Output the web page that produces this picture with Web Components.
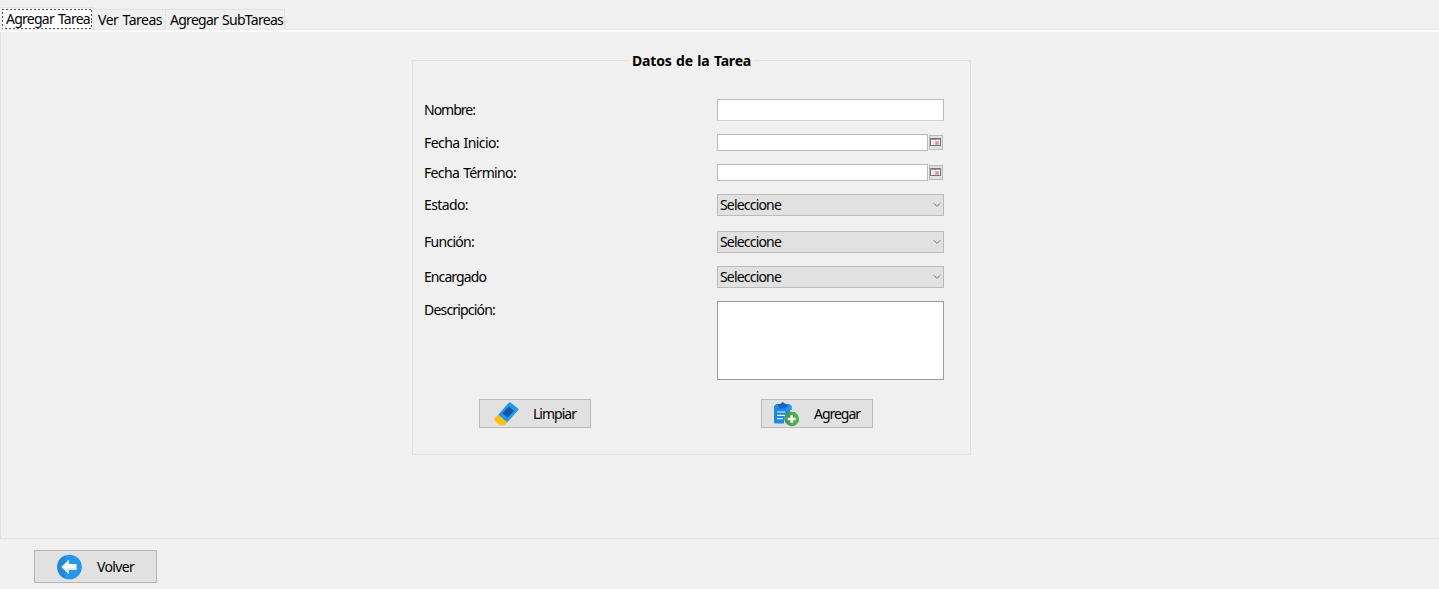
<!DOCTYPE html>
<html lang="es"><head><meta charset="utf-8"><title>Tareas</title>
<style>html,body{margin:0;height:100%;overflow:hidden;background:#f0f0f0}body{font:14px/18px "Noto Sans","DejaVu Sans",sans-serif;color:#000}</style></head>
<body><task-window></task-window>
<script>
const define=(name,html,setup)=>{
  const t=document.createElement('template');t.innerHTML=html;
  customElements.define(name,class extends HTMLElement{
    connectedCallback(){
      if(this.shadowRoot)return;
      this.attachShadow({mode:'open'}).append(t.content.cloneNode(true));
      if(setup)setup(this,this.shadowRoot);
    }
  });
};
// Text run tracked so that it fills the width given in "w".
define('ui-text','<style>:host{display:inline-block;white-space:nowrap;line-height:18px;word-spacing:1px}span{display:inline-block}</style><span><slot></slot></span>',(el,root)=>{
  const s=root.querySelector('span'),w=+el.getAttribute('w');
  if(w)s.style.letterSpacing=(w-s.getBoundingClientRect().width)/el.textContent.length+'px';
});
define('ui-tab',`<style>
:host{display:block;box-sizing:border-box;height:20px;padding:1px 0 0 4px;border:1px solid #e2e2e2;border-left:0;border-bottom:0;white-space:nowrap}
:host([selected]){height:22px;border-color:#e4e4e4;padding:1px 1px 0 1px}
:host([selected]) div{box-sizing:border-box;height:20px;background:#fff;border:1px dashed #555;border-width:1px;border-image:repeating-linear-gradient(45deg,#555 0 1.4px,#fff 1.4px 2.8px) 1;padding-left:3px}
:host([selected]) ::slotted(ui-text){margin-top:-1px}
</style><div><slot></slot></div>`);
define('ui-input',`<style>:host{display:block;box-sizing:border-box;height:22px;background:#fff;border:1px solid #bbb;border-bottom-color:#d5d5d5}</style>`);
define('ui-area',`<style>:host{display:block;box-sizing:border-box;height:79px;background:#fff;border:1px solid #9b9ca2}</style>`);
define('ui-date',`<style>
:host{display:flex;height:17px;gap:1px;align-items:center}
.f{box-sizing:border-box;width:211px;height:17px;background:#fff;border:1px solid #bbb}
.b{box-sizing:border-box;width:14px;height:15px;background:#e1e1e1;border:1px solid #bcbcbc;display:flex;align-items:center}
svg{display:block;flex:none}
</style><div class="f"></div><div class="b"><svg width="12" height="9" viewBox="0 0 12 9" shape-rendering="crispEdges"><path fill="#70747a" d="M0 0h11v8H0z"/><path fill="#c29a60" d="M1 1h4v1H1z"/><path fill="#8cabc9" d="M6 1h4v1H6z"/><path fill="#f6f6f6" d="M1 2h9v5H1z"/><path fill="#dedede" d="M3 3h1v4H3z"/><path fill="#f5a5aa" d="M5 3h4v4H5z"/><path fill="#ee8c92" d="M6 4h2v2H6z"/></svg></div>`);
define('ui-select',`<style>
:host{display:flex;box-sizing:border-box;height:22px;align-items:center;justify-content:space-between;padding:0 2px 0 2px;background:#e1e1e1;border:1px solid #bbb}
svg{display:block}</style><slot></slot><svg width="8" height="6" viewBox="0 0 8 6"><path d="M.8 1.2L4 4.4 7.2 1.2" fill="none" stroke="#777" stroke-width="1"/></svg>`);
define('ui-button',`<style>
:host{display:flex;box-sizing:border-box;width:112px;height:29px;align-items:center;background:#e1e1e1;border:1px solid #bbb;padding-left:14px;gap:14px}
:host([large]){width:123px;height:33px;border-color:#b5b5b5;padding-left:22px;gap:14px}
::slotted(svg){display:block;flex:none}
</style><slot name="icon"></slot><slot></slot>`);
define('ui-row',`<style>
:host{display:flex;align-items:center;justify-content:space-between}
:host([top]){align-items:flex-start}
:host([date]){height:17px}
:host([date]) ::slotted(ui-text){padding-top:1px}
.c{width:227px}</style><slot name="label"></slot><div class="c"><slot></slot></div>`);
define('ui-group',`<style>
:host{display:block;box-sizing:border-box;width:559px;height:395px;border:1px solid #e0e0e0}
.t{display:flex;justify-content:center;height:18px;margin-top:-9px;font-weight:700}
.t span{background:#f0f0f0;padding:0 3px;height:18px}
.b{padding:29px 26px 0 11px}</style><div class="t"><span><slot name="title"></slot></span></div><div class="b"><slot></slot></div>`);
define('task-window',`<style>
:host{display:flex;flex-direction:column;height:589px;background:#f0f0f0}
nav{display:flex;align-items:flex-end;height:29px;padding-left:1px;border-bottom:1px solid #e8e8e8}
nav ui-tab:nth-child(1){width:93px}nav ui-tab:nth-child(2){width:72px}nav ui-tab:nth-child(3){width:119px}
main{box-sizing:border-box;height:509px;border-top:2px solid #fff;border-left:1px solid #e2e2e2;border-bottom:1px solid #e2e2e2;padding:28px 0 0 411px}
.m13{margin-top:13px}.m15{margin-top:15px}
.actions{display:flex;gap:170px;margin:19px 0 0 55px}
footer{padding:11px 0 0 34px}
</style>
<nav><ui-tab selected><ui-text w="84">Agregar Tarea</ui-text></ui-tab><ui-tab><ui-text w="64">Ver Tareas</ui-text></ui-tab><ui-tab><ui-text w="113">Agregar SubTareas</ui-text></ui-tab></nav>
<main><ui-group><ui-text slot="title" w="119">Datos de la Tarea</ui-text>
<ui-row><ui-text slot="label" w="51">Nombre:</ui-text><ui-input></ui-input></ui-row>
<ui-row date class="m13"><ui-text slot="label" w="75">Fecha Inicio:</ui-text><ui-date></ui-date></ui-row>
<ui-row date class="m13"><ui-text slot="label" w="92">Fecha Término:</ui-text><ui-date></ui-date></ui-row>
<ui-row class="m13"><ui-text slot="label" w="44">Estado:</ui-text><ui-select><ui-text w="61">Seleccione</ui-text></ui-select></ui-row>
<ui-row class="m15"><ui-text slot="label" w="50">Función:</ui-text><ui-select><ui-text w="61">Seleccione</ui-text></ui-select></ui-row>
<ui-row class="m13"><ui-text slot="label" w="62">Encargado</ui-text><ui-select><ui-text w="61">Seleccione</ui-text></ui-select></ui-row>
<ui-row top class="m13"><ui-text slot="label" w="71">Descripción:</ui-text><ui-area></ui-area></ui-row>
<div class="actions">
<ui-button><svg slot="icon" width="25" height="25" viewBox="0 0 25 25"><path fill="#2196f3" d="M14.500 2q1.200-1.200 2.400-.2l6.800 5.400q1.400 1.100.2 2.400L13 21.500 4 14z"/><path fill="#0d57a5" d="M14.800 5.500l5.200 4.200-6.400 6.900L8.200 12.400z"/><path fill="#ffc107" d="M4 13.500l9.300 7.700-1.800 2q-1 1-2.300 1H7q-1.200 0-2-.7L1 20Q-.2 18.800.9 17.200z"/></svg><ui-text w="43">Limpiar</ui-text></ui-button>
<ui-button style="padding-left:11px;gap:14px"><svg slot="icon" width="26" height="26" viewBox="0 0 26 26"><path fill="#1e88e5" d="M3.200 3H16l2.500 2v4h-1.600v3l-5 3-1 7.500H2.500Q1 22.500 1 21V5.200z"/><path fill="#2196f3" d="M10 3h6l2.500 2v4H10z"/><path fill="#1565c0" d="M5 3.200L8 2.500 9.800.7 11.500 2.500l3 .7V5L12 7.500H7.500L5 5z"/><path stroke="#e8f3fc" stroke-width="1.2" d="M4 11h8.500M4 14.300h8M4 17.600h6"/><circle cx="18.700" cy="18" r="7.200" fill="#43a047"/><path fill="#4caf50" d="M18.700 10.800a7.200 7.200 0 010 14.400z"/><path stroke="#fff" stroke-width="2.500" d="M18.700 14v8M14.700 18h8"/></svg><ui-text style="margin-left:1px" w="46">Agregar</ui-text></ui-button>
</div></ui-group></main>
<footer><ui-button large><svg slot="icon" width="26" height="26" viewBox="0 0 26 26"><circle cx="12.500" cy="13" r="12.300" fill="#2196f3"/><path fill="#1e88d8" d="M8 1.600A12.300 12.300 0 008 24.400z"/><path fill="#fff" d="M4.200 13L12 5.800V10h7.500v6H12v4.200z"/><path fill="#dfe6ec" d="M5.500 14.200H19.500V16H12v4.200z"/></svg><ui-text w="37">Volver</ui-text></ui-button></footer>`);
</script></body></html>
